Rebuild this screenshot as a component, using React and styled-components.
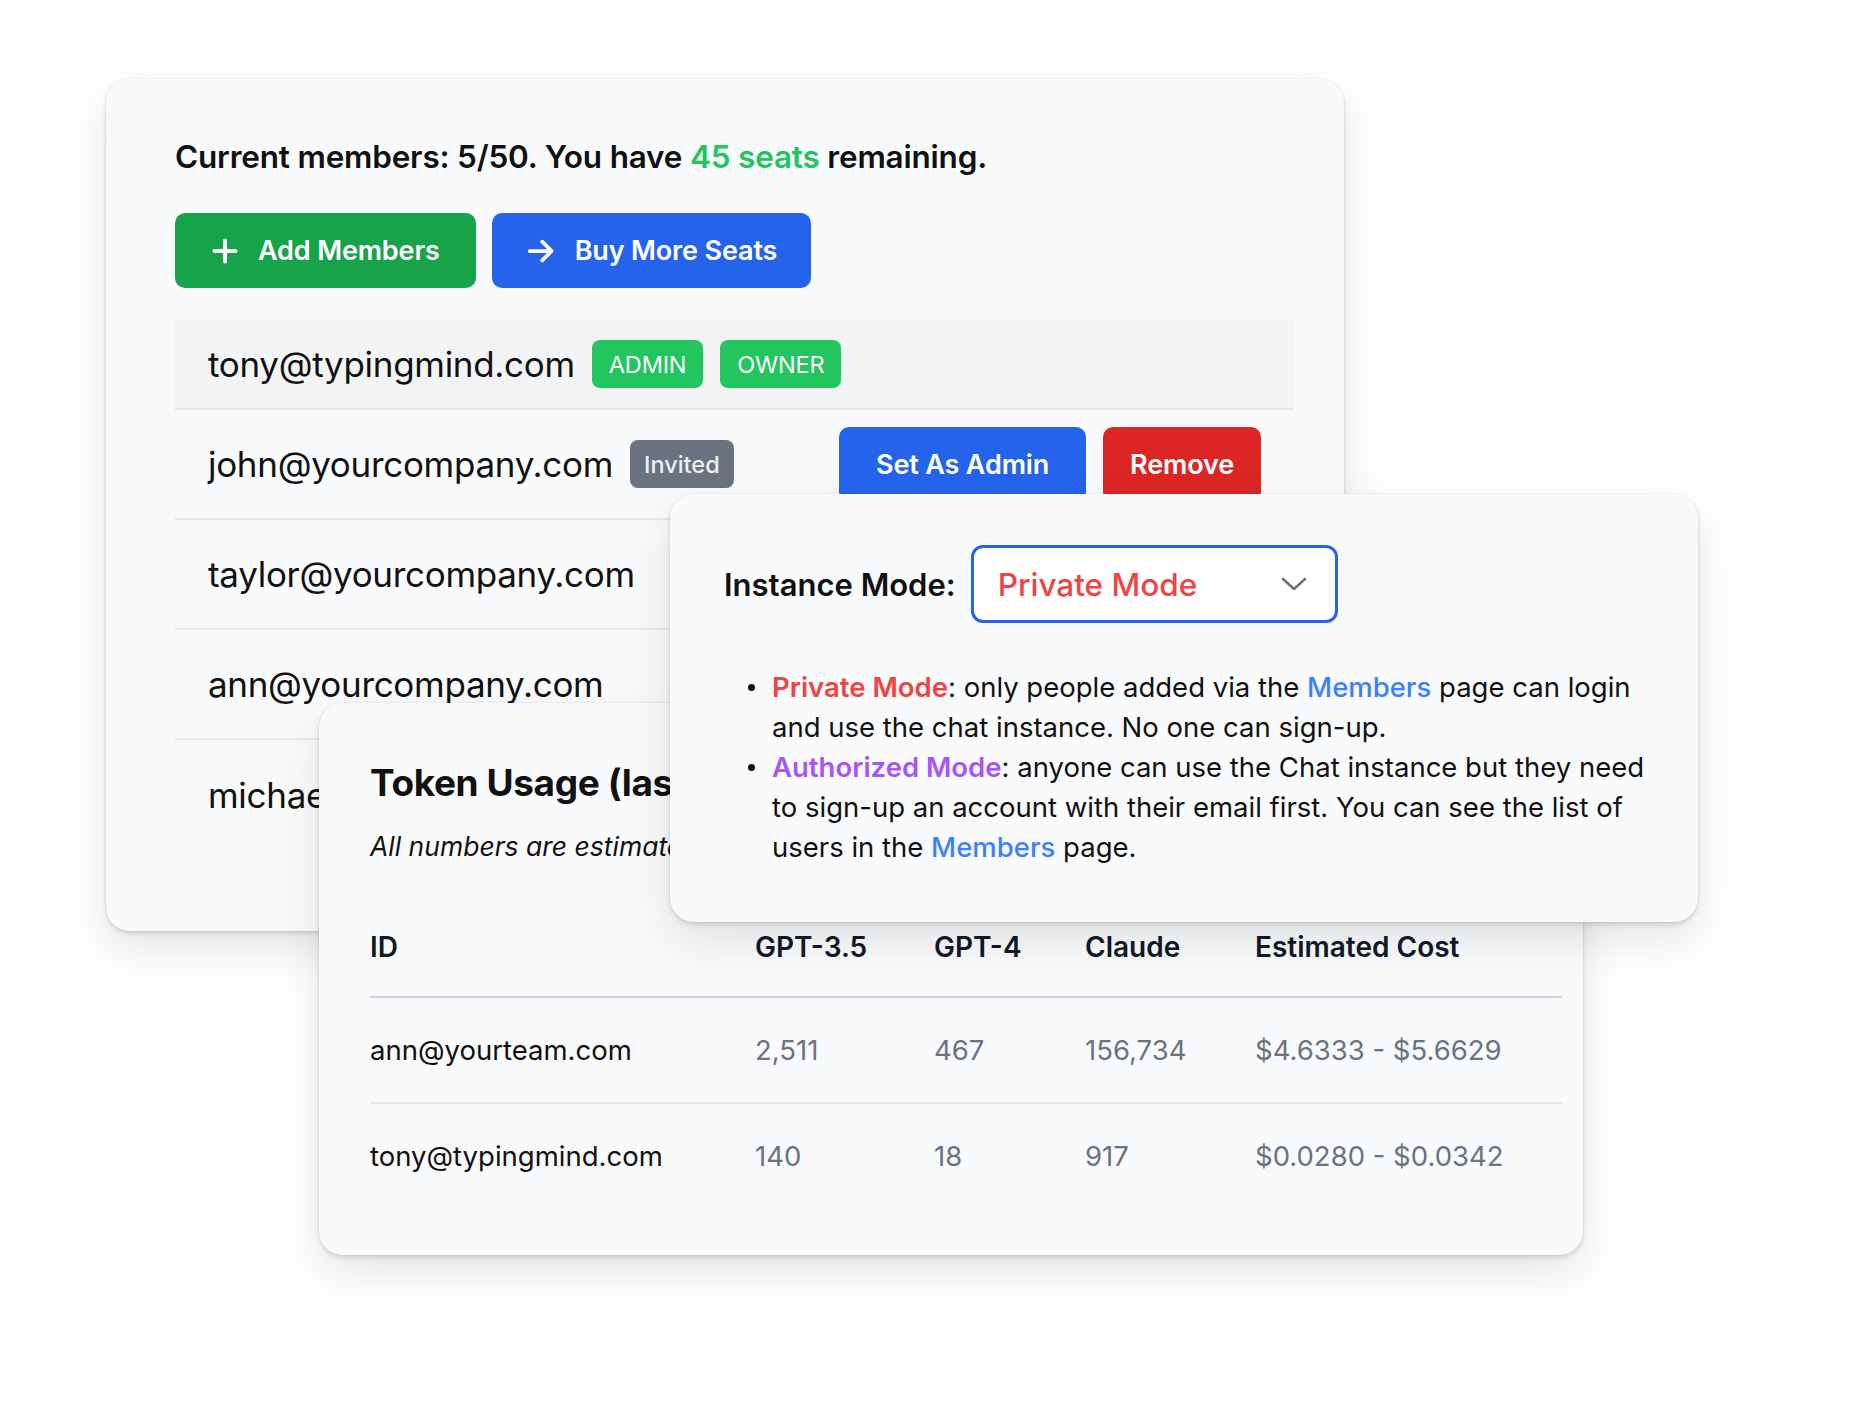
import React from "react";
import styled, { createGlobalStyle } from "styled-components";

const GlobalStyle = createGlobalStyle`
  html, body {
    margin: 0;
    padding: 0;
    background: #ffffff;
  }
  body {
    font-family: Inter, "Noto Sans", "Liberation Sans", sans-serif;
    color: #111827;
    -webkit-font-smoothing: antialiased;
  }
  * { box-sizing: border-box; }
`;

/* ---------- canvas with floating panels ---------- */

const Stage = styled.div`
  position: relative;
  width: 1852px;
  height: 1407px;
  overflow: hidden;
  background: #ffffff;
`;

const Panel = styled.section`
  position: absolute;
  left: ${(p) => p.$x}px;
  top: ${(p) => p.$y}px;
  width: ${(p) => p.$w}px;
  height: ${(p) => p.$h}px;
  z-index: ${(p) => p.$z};
  background: #f9fafb;
  border-radius: 24px;
  overflow: hidden;
  box-shadow:
    0 0 0 1px rgba(0, 0, 0, 0.035),
    0 3px 5px rgba(0, 0, 0, 0.12),
    0 18px 45px rgba(0, 0, 0, 0.1);
`;

/* ---------- members panel ---------- */

const MembersBody = styled.div`
  display: flex;
  flex-direction: column;
  padding: 58px 50px 0 69px;
`;

const Summary = styled.h2`
  margin: 0;
  font-size: 31.5px;
  line-height: 40px;
  font-weight: 600;
  color: #111111;
  letter-spacing: -0.2px;
`;

const Accent = styled.span`
  color: ${(p) => p.$color};
  font-weight: ${(p) => p.$weight || "inherit"};
`;

const Toolbar = styled.div`
  display: flex;
  gap: 16px;
  margin-top: 36px;
  margin-bottom: 32px;
`;

const ActionButton = styled.button`
  display: inline-flex;
  align-items: center;
  justify-content: center;
  gap: 19px;
  height: 75px;
  padding: 0 ${(p) => p.$pad || 36}px;
  border: none;
  border-radius: 10px;
  background: ${(p) => p.$bg};
  color: #ffffff;
  font-family: inherit;
  font-size: 27px;
  font-weight: 600;
  letter-spacing: -0.15px;
  cursor: pointer;
  svg { flex: none; }
`;

const MemberList = styled.div`
  display: flex;
  flex-direction: column;
`;

const MemberRow = styled.div`
  display: flex;
  align-items: center;
  gap: 17px;
  padding: ${(p) => (p.$owner ? "20px 33px" : "16.5px 33px")};
  min-height: ${(p) => (p.$owner ? 88 : 110)}px;
  background: ${(p) => (p.$owner ? "#f3f4f6" : "transparent")};
  border-bottom: ${(p) => (p.$last ? "none" : "2px solid #e5e7eb")};
`;

const Email = styled.span`
  font-size: 35px;
  line-height: 44px;
  font-weight: 400;
  color: #111111;
  letter-spacing: -0.3px;
  white-space: nowrap;
`;

const Badge = styled.span`
  display: inline-flex;
  align-items: center;
  height: 48px;
  padding: 0 ${(p) => (p.$muted ? 14 : 17)}px;
  border-radius: 8px;
  background: ${(p) => (p.$muted ? "#6b7280" : "#22c55e")};
  color: ${(p) => (p.$muted ? "#eef0f3" : "#ffffff")};
  font-size: 23.5px;
  font-weight: ${(p) => (p.$muted ? 500 : 400)};
  letter-spacing: ${(p) => (p.$muted ? "0" : "-0.2px")};
`;

const RowActions = styled.div`
  display: flex;
  gap: 17px;
  margin-left: auto;
`;

/* ---------- token usage panel ---------- */

const UsageBody = styled.div`
  padding: 58px 21px 48px 51px;
`;

const UsageTitle = styled.h3`
  margin: 0;
  font-size: 37px;
  line-height: 44px;
  font-weight: 700;
  letter-spacing: -0.4px;
  color: #111111;
  white-space: nowrap;
`;

const UsageNote = styled.p`
  margin: 22px 0 32px;
  font-size: 26.5px;
  line-height: 39px;
  font-style: italic;
  color: #111111;
  white-space: nowrap;
`;

const UsageRow = styled.div`
  display: grid;
  grid-template-columns: 385px 179px 151px 170px 1fr;
  align-items: center;
  padding: ${(p) => (p.$head ? "31px 0" : "34px 0")};
  border-bottom: ${(p) =>
    p.$head ? "2.5px solid #d1d5db" : p.$last ? "none" : "2px solid #e5e7eb"};
`;

const Cell = styled.span`
  font-size: ${(p) => (p.$head ? 28 : 27.5)}px;
  line-height: 36px;
  white-space: nowrap;
  font-weight: ${(p) => (p.$head ? 600 : 400)};
  color: ${(p) => (p.$head ? "#111827" : p.$dim ? "#6b7280" : "#111111")};
  letter-spacing: 0;
`;

/* ---------- instance mode panel ---------- */

const ModeBody = styled.div`
  padding: 51px 54px 0 54px;
`;

const ModeField = styled.div`
  display: flex;
  align-items: center;
  gap: 15px;
`;

const FieldLabel = styled.label`
  font-size: 31px;
  font-weight: 600;
  color: #111111;
  letter-spacing: 0;
`;

const SelectBox = styled.div`
  display: flex;
  align-items: center;
  justify-content: space-between;
  width: 367px;
  height: 78px;
  padding: 0 28px 0 24px;
  background: #ffffff;
  border: 3px solid #2563eb;
  border-radius: 12px;
  color: #ef4444;
  font-size: 31.5px;
  font-weight: 500;
  letter-spacing: 0;
`;

const ModeList = styled.ul`
  margin: 44px 0 0;
  padding: 0 0 0 48px;
  list-style: none;
`;

const ModeItem = styled.li`
  position: relative;
  font-size: 27.5px;
  line-height: 40px;
  color: #111111;
  letter-spacing: 0;
  white-space: nowrap;

  &::before {
    content: "";
    position: absolute;
    left: -24px;
    top: 17px;
    width: 7px;
    height: 7px;
    border-radius: 50%;
    background: #111111;
  }
`;

/* ---------- icons ---------- */

const PlusIcon = () => (
  <svg width="28" height="28" viewBox="0 0 24 24" fill="none" stroke="currentColor"
    strokeWidth="3.4" strokeLinecap="round">
    <path d="M12 3v18M3 12h18" />
  </svg>
);

const ArrowIcon = () => (
  <svg width="30" height="30" viewBox="0 0 24 24" fill="none" stroke="currentColor"
    strokeWidth="3" strokeLinecap="round" strokeLinejoin="round">
    <path d="M3 12h17M13 4.5l7.5 7.5-7.5 7.5" />
  </svg>
);

const ChevronIcon = () => (
  <svg width="26" height="14" viewBox="0 0 26 14" fill="none" stroke="#6b7280"
    strokeWidth="2.6" strokeLinecap="round" strokeLinejoin="round">
    <path d="M2 2l11 10L24 2" />
  </svg>
);

/* ---------- data ---------- */

const members = [
  { email: "tony@typingmind.com", roles: ["ADMIN", "OWNER"] },
  { email: "john@yourcompany.com", invited: true, actions: true },
  { email: "taylor@yourcompany.com" },
  { email: "ann@yourcompany.com" },
  { email: "michael@yourcompany.com" },
];

const usage = [
  { id: "ann@yourteam.com", g35: "2,511", g4: "467", claude: "156,734", cost: "$4.6333 - $5.6629" },
  { id: "tony@typingmind.com", g35: "140", g4: "18", claude: "917", cost: "$0.0280 - $0.0342" },
];

export default function App() {
  return (
    <>
      <GlobalStyle />
      <Stage>
        <Panel $x={106} $y={79} $w={1238} $h={852} $z={1}>
          <MembersBody>
            <Summary>
              Current members: 5/50. You have <Accent $color="#22c55e">45 seats</Accent> remaining.
            </Summary>
            <Toolbar>
              <ActionButton $bg="#16a34a">
                <PlusIcon />
                Add Members
              </ActionButton>
              <ActionButton $bg="#2563eb" $pad={34}>
                <ArrowIcon />
                Buy More Seats
              </ActionButton>
            </Toolbar>
            <MemberList>
              {members.map((m, i) => {
                const owner = Boolean(m.roles);
                return (
                  <MemberRow key={m.email} $owner={owner} $last={i === members.length - 1}>
                    <Email>{m.email}</Email>
                    {owner && m.roles.map((r) => <Badge key={r}>{r}</Badge>)}
                    {m.invited && <Badge $muted>Invited</Badge>}
                    {m.actions && (
                      <RowActions>
                        <ActionButton $bg="#2563eb" $pad={37}>Set As Admin</ActionButton>
                        <ActionButton $bg="#dc2626" $pad={27}>Remove</ActionButton>
                      </RowActions>
                    )}
                  </MemberRow>
                );
              })}
            </MemberList>
          </MembersBody>
        </Panel>

        <Panel $x={319} $y={703} $w={1264} $h={552} $z={2}>
          <UsageBody>
            <UsageTitle>Token Usage (last 30 days)</UsageTitle>
            <UsageNote>All numbers are estimated and may not be exact.</UsageNote>
            <UsageRow $head>
              <Cell $head>ID</Cell>
              <Cell $head>GPT-3.5</Cell>
              <Cell $head>GPT-4</Cell>
              <Cell $head>Claude</Cell>
              <Cell $head>Estimated Cost</Cell>
            </UsageRow>
            {usage.map((u, i) => (
              <UsageRow key={u.id} $last={i === usage.length - 1}>
                <Cell>{u.id}</Cell>
                <Cell $dim>{u.g35}</Cell>
                <Cell $dim>{u.g4}</Cell>
                <Cell $dim>{u.claude}</Cell>
                <Cell $dim>{u.cost}</Cell>
              </UsageRow>
            ))}
          </UsageBody>
        </Panel>

        <Panel $x={670} $y={494} $w={1028} $h={428} $z={3}>
          <ModeBody>
            <ModeField>
              <FieldLabel>Instance Mode:</FieldLabel>
              <SelectBox>
                Private Mode
                <ChevronIcon />
              </SelectBox>
            </ModeField>
            <ModeList>
              <ModeItem>
                <Accent $color="#ef4444" $weight={600}>Private Mode</Accent>: only people added via the{" "}
                <Accent $color="#3b82f6" $weight={500}>Members</Accent> page can login
                <br />
                and use the chat instance. No one can sign-up.
              </ModeItem>
              <ModeItem>
                <Accent $color="#a855f7" $weight={600}>Authorized Mode</Accent>: anyone can use the Chat instance but they need
                <br />
                to sign-up an account with their email first. You can see the list of
                <br />
                users in the <Accent $color="#3b82f6" $weight={500}>Members</Accent> page.
              </ModeItem>
            </ModeList>
          </ModeBody>
        </Panel>
      </Stage>
    </>
  );
}
